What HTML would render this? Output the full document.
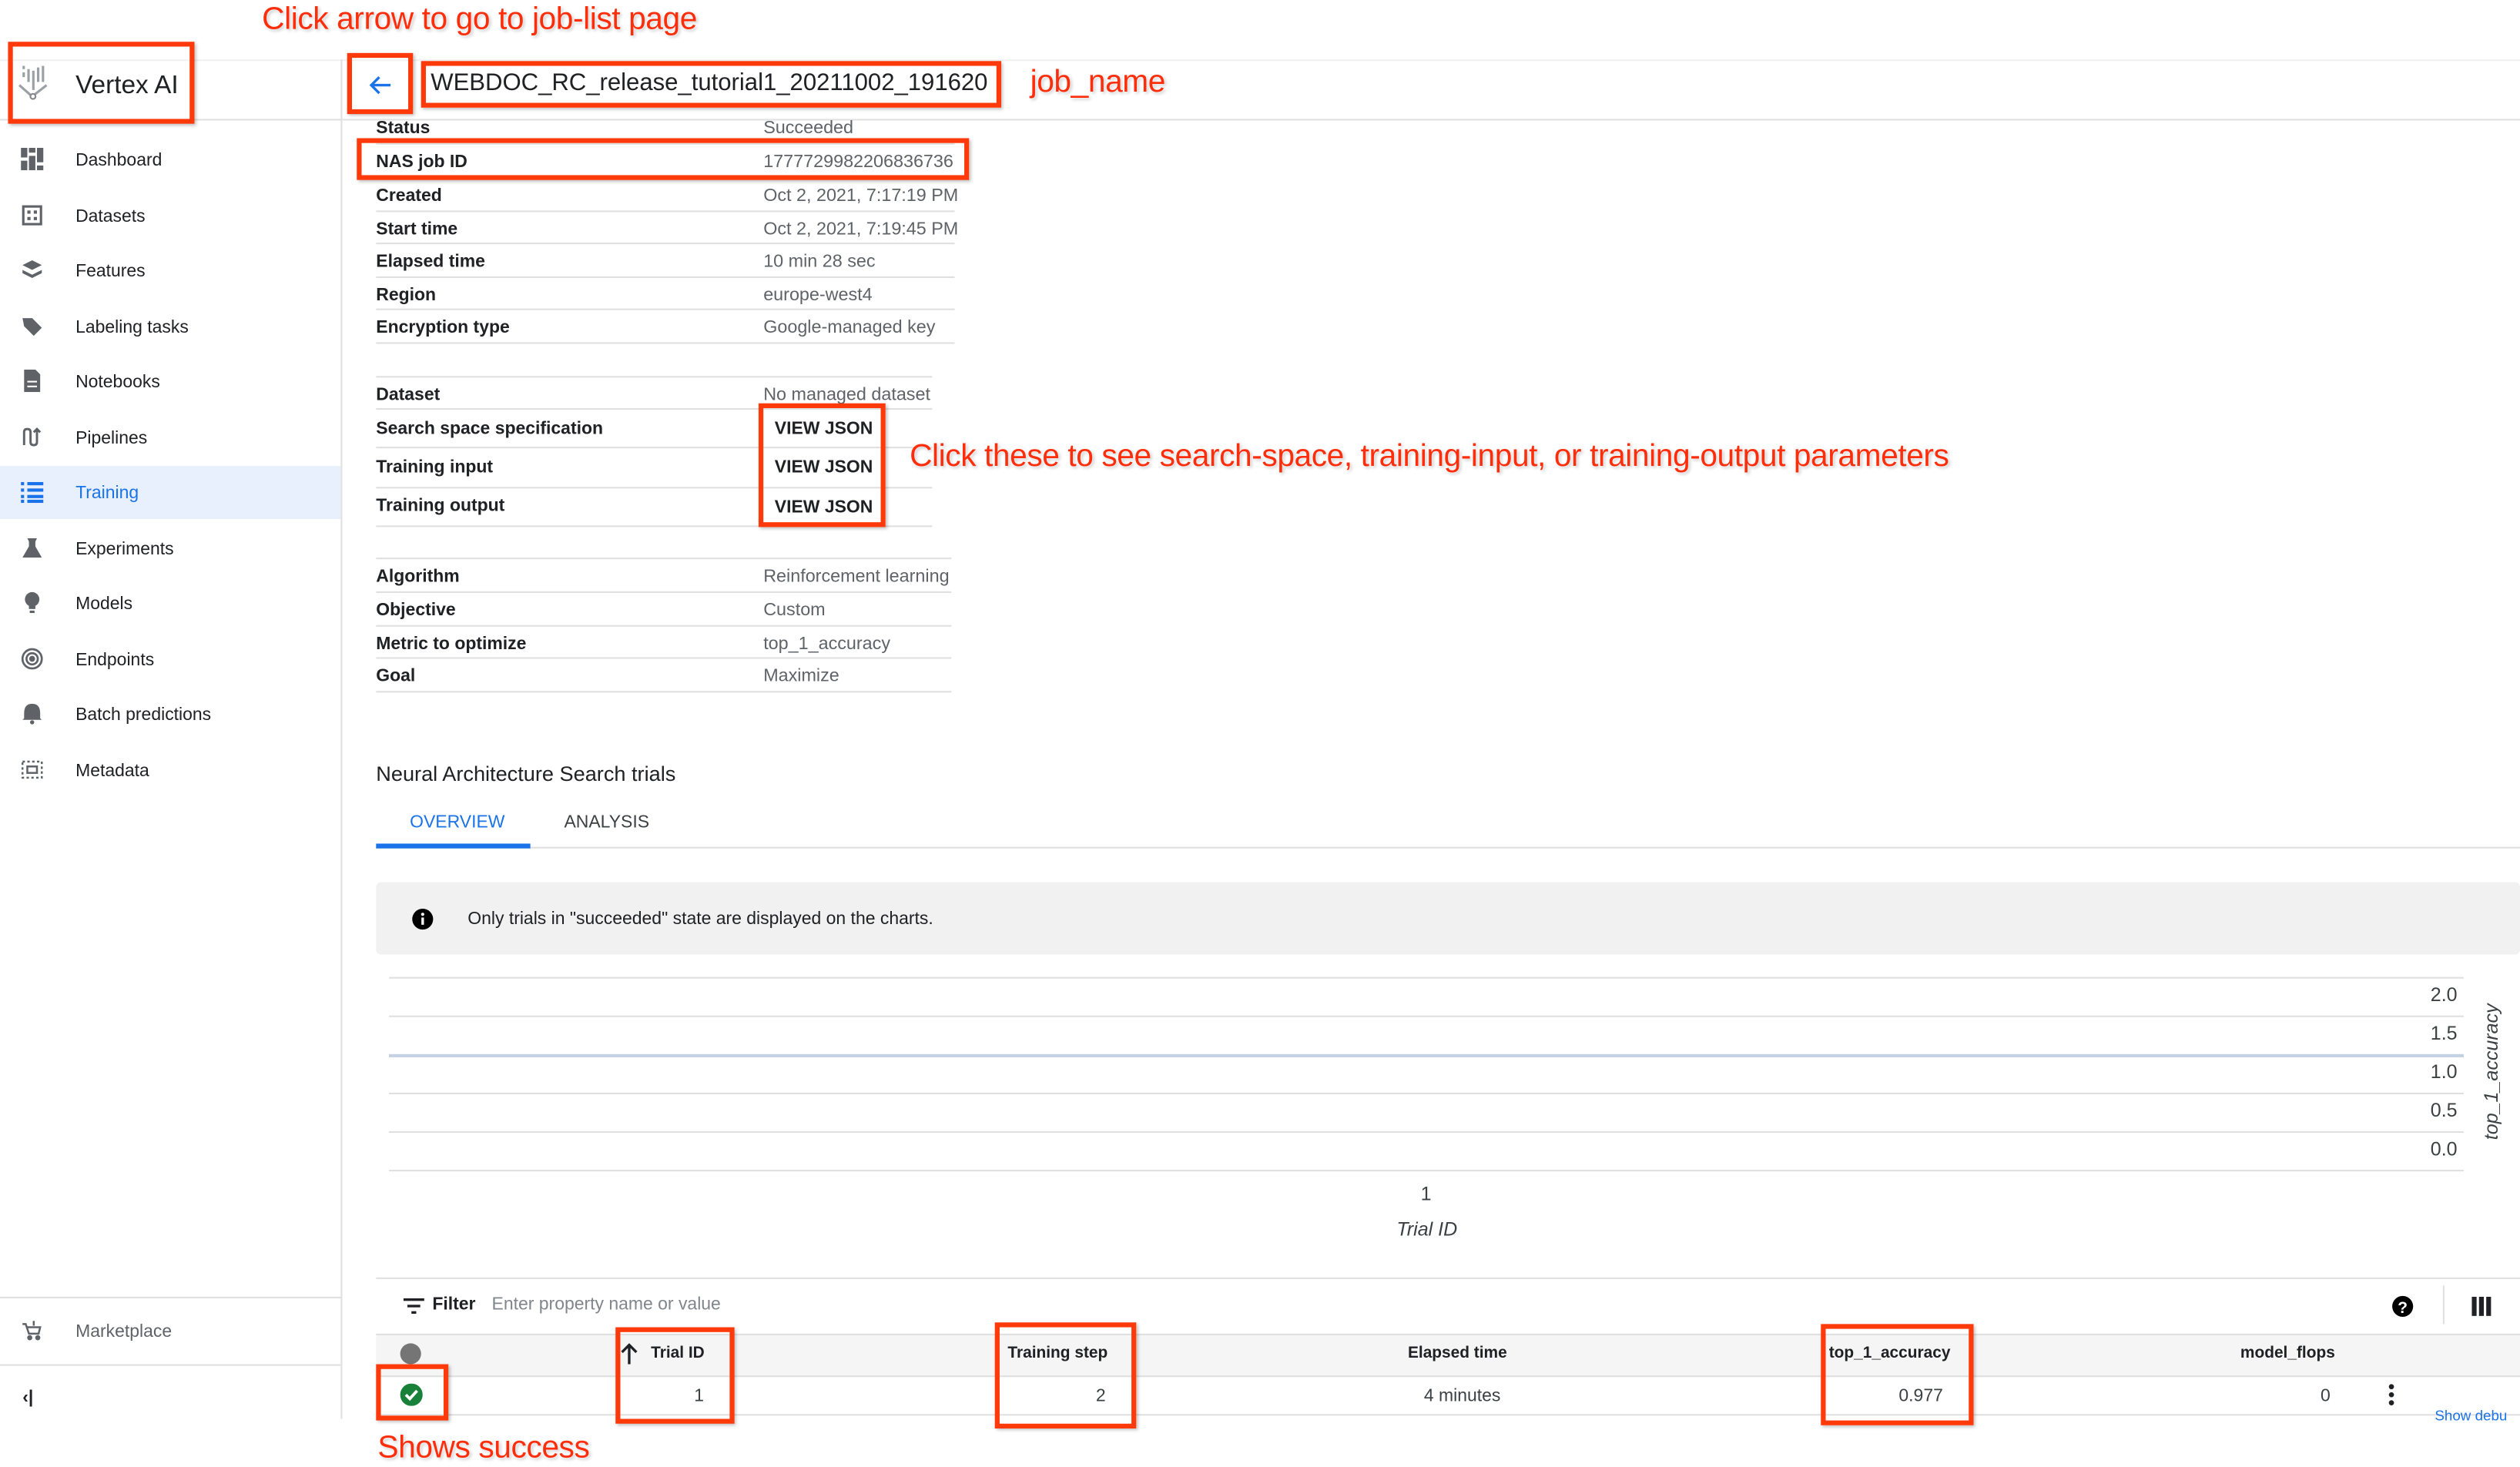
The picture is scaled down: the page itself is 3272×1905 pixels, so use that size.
<!DOCTYPE html>
<html><head><meta charset="utf-8">
<style>
html,body{margin:0;padding:0;background:#fff;overflow:hidden}
body{width:3272px;height:1905px;position:relative}
#s{position:absolute;left:0;top:0;width:1568px;height:913px;transform:scale(2.08673,2.08661);transform-origin:0 0;font-family:"Liberation Sans",sans-serif;color:#202124}
.a{position:absolute;white-space:nowrap}
.hl{position:absolute;height:1px;background:#e0e0e0}
.rb{position:absolute;border:3px solid #ff3a0a;box-sizing:border-box;box-shadow:1px 1px 2px rgba(0,0,0,.25)}
.ann{position:absolute;white-space:nowrap;color:#ff2d0a;font-size:19.5px;text-shadow:0 0 2px #fff,1px 1px 2px #bbb;letter-spacing:-0.2px}
.lab{font-size:11px;font-weight:bold;color:#202124;margin-top:1px}
.val{font-size:11.2px;color:#5f6368;margin-top:1px}
.nav{position:absolute;left:47px;font-size:11px;color:#202124;margin-top:1px}
.ic{position:absolute;left:13px;width:14px;height:14px}
</style></head><body><div id="s">
<div class="hl" style="left:0;top:37px;width:1568px;background:#f1f1f1"></div>
<div class="hl" style="left:0;top:74px;width:1568px"></div>
<div style="position:absolute;left:212px;top:37px;width:1px;height:846px;background:#e0e0e0"></div>

<svg class="a" style="left:10px;top:40px" width="22" height="24" viewBox="0 0 22 24">
<g fill="#9aa0a6"><rect x="4" y="1" width="1.5" height="2"/><rect x="4" y="5" width="1.5" height="3"/><rect x="7" y="3" width="1.5" height="8"/><rect x="10" y="4" width="1.5" height="12"/><rect x="13" y="2" width="1.5" height="9"/><rect x="16" y="1" width="1.5" height="10"/></g>
<path d="M2 13 L10 20 L19 13" stroke="#9aa0a6" stroke-width="1.5" fill="none"/><circle cx="10.5" cy="20" r="1.6" fill="#fff" stroke="#80868b"/></svg>
<div class="a" style="left:47px;top:45px;font-size:16px;color:#202124">Vertex AI</div>
<div class="rb" style="left:5px;top:26px;width:116px;height:51px"></div>
<div class="ann" style="left:163px;top:1px">Click arrow to go to job-list page</div>

<svg class="a" style="left:229px;top:45px" width="16" height="16" viewBox="0 0 16 16"><path d="M14 8 L2 8 M7 3 L2 8 L7 13" stroke="#1a73e8" stroke-width="1.6" fill="none"/></svg>
<div class="rb" style="left:216px;top:33px;width:41px;height:38px"></div>
<div class="a" style="left:268px;top:44px;font-size:14.9px;color:#202124">WEBDOC_RC_release_tutorial1_20211002_191620</div>
<div class="rb" style="left:262px;top:38px;width:361px;height:29px"></div>
<div class="ann" style="left:641px;top:40px">job_name</div>

<div style="position:absolute;left:0;top:290px;width:212px;height:33px;background:#e8f0fe"></div>
<svg class="ic" style="top:92px" viewBox="0 0 14 14" fill="#5f6368"><rect x="0" y="0" width="4" height="6"/><rect x="0" y="8" width="4" height="6"/><rect x="5" y="0" width="4" height="3"/><rect x="5" y="5" width="4" height="9"/><rect x="10" y="0" width="4" height="9"/><rect x="10" y="11" width="4" height="3"/></svg>
<div class="nav" style="top:93px">Dashboard</div>
<svg class="ic" style="top:127px" viewBox="0 0 14 14"><rect x="1.5" y="1.5" width="11" height="11" fill="none" stroke="#5f6368" stroke-width="1.5"/><g fill="#5f6368"><rect x="4" y="4" width="2" height="2"/><rect x="8" y="4" width="2" height="2"/><rect x="4" y="8" width="2" height="2"/><rect x="8" y="8" width="2" height="2"/></g></svg>
<div class="nav" style="top:128px">Datasets</div>
<svg class="ic" style="top:161px" viewBox="0 0 14 14" fill="#5f6368"><path d="M7 1 L13 4 L7 7 L1 4Z"/><path d="M1 7 L7 10 L13 7 L13 9 L7 12 L1 9Z"/></svg>
<div class="nav" style="top:162px">Features</div>
<svg class="ic" style="top:196px" viewBox="0 0 14 14" fill="#5f6368"><path d="M1 2 L7 2 L13 8 L8 13 L2 7Z"/></svg>
<div class="nav" style="top:197px">Labeling tasks</div>
<svg class="ic" style="top:230px" viewBox="0 0 14 14" fill="#5f6368"><path d="M2 0 L9 0 L12 3 L12 14 L2 14Z"/><rect x="4" y="7" width="6" height="1" fill="#fff"/><rect x="4" y="10" width="6" height="1" fill="#fff"/></svg>
<div class="nav" style="top:231px">Notebooks</div>
<svg class="ic" style="top:265px" viewBox="0 0 14 14" fill="none" stroke="#5f6368" stroke-width="1.4"><path d="M2 12 L2 4 Q2 2 4 2 Q6 2 6 4 L6 10 Q6 12 8 12 Q10 12 10 10 L10 2 M8 4 L10 2 L12 4"/></svg>
<div class="nav" style="top:266px">Pipelines</div>
<svg class="ic" style="top:299px" viewBox="0 0 14 14" fill="#1a73e8"><rect x="0" y="1" width="2" height="2"/><rect x="4" y="1" width="10" height="2"/><rect x="0" y="5" width="2" height="2"/><rect x="4" y="5" width="10" height="2"/><rect x="0" y="9" width="2" height="2"/><rect x="4" y="9" width="10" height="2"/><rect x="0" y="12" width="2" height="2"/><rect x="4" y="12" width="10" height="2"/></svg>
<div class="nav" style="top:300px;color:#1a73e8">Training</div>
<svg class="ic" style="top:334px" viewBox="0 0 14 14" fill="#5f6368"><path d="M4 1 L10 1 L9 3 L9 6 L13 13 L1 13 L5 6 L5 3Z"/></svg>
<div class="nav" style="top:335px">Experiments</div>
<svg class="ic" style="top:368px" viewBox="0 0 14 14" fill="#5f6368"><circle cx="7" cy="5" r="4.5"/><rect x="5" y="9" width="4" height="2"/><rect x="5.5" y="12" width="3" height="1.5"/></svg>
<div class="nav" style="top:369px">Models</div>
<svg class="ic" style="top:403px" viewBox="0 0 14 14" fill="none" stroke="#5f6368" stroke-width="1.3"><circle cx="7" cy="7" r="6"/><circle cx="7" cy="7" r="3.5"/><circle cx="7" cy="7" r="1.2" fill="#5f6368"/></svg>
<div class="nav" style="top:404px">Endpoints</div>
<svg class="ic" style="top:437px" viewBox="0 0 14 14" fill="#5f6368"><path d="M7 1 Q12 1 12 7 L12 10 L13 11 L1 11 L2 10 L2 7 Q2 1 7 1Z"/><circle cx="7" cy="12.5" r="1.3"/></svg>
<div class="nav" style="top:438px">Batch predictions</div>
<svg class="ic" style="top:472px" viewBox="0 0 14 14" fill="none" stroke="#5f6368" stroke-width="1.2"><rect x="1" y="2" width="12" height="10" stroke-dasharray="1.5 1.5"/><rect x="4" y="5" width="6" height="4"/></svg>
<div class="nav" style="top:473px">Metadata</div>
<div class="hl" style="left:0;top:807px;width:212px"></div>
<svg class="ic" style="top:821px" viewBox="0 0 14 14" fill="none" stroke="#5f6368" stroke-width="1.2"><path d="M1 3 L3 3 L5 9 L11 9 L12 5 L4 5"/><circle cx="5.5" cy="11.5" r="1" fill="#5f6368"/><circle cx="10.5" cy="11.5" r="1" fill="#5f6368"/><path d="M8 1 L8 4"/></svg>
<div class="nav" style="top:822px;color:#5f6368">Marketplace</div>
<div class="hl" style="left:0;top:849px;width:212px"></div>
<div class="a" style="left:14px;top:864px;font-size:11px;color:#202124;font-weight:bold">&lsaquo;|</div>

<div class="a lab" style="left:234px;top:73px">Status</div><div class="a val" style="left:475px;top:73px">Succeeded</div>
<div class="hl" style="left:234px;top:89px;width:360px"></div>
<div class="a lab" style="left:234px;top:94px">NAS job ID</div><div class="a val" style="left:475px;top:94px">1777729982206836736</div>
<div class="hl" style="left:234px;top:110px;width:360px"></div>
<div class="a lab" style="left:234px;top:115px">Created</div><div class="a val" style="left:475px;top:115px">Oct 2, 2021, 7:17:19 PM</div>
<div class="hl" style="left:234px;top:131px;width:360px"></div>
<div class="a lab" style="left:234px;top:136px">Start time</div><div class="a val" style="left:475px;top:136px">Oct 2, 2021, 7:19:45 PM</div>
<div class="hl" style="left:234px;top:151px;width:360px"></div>
<div class="a lab" style="left:234px;top:156px">Elapsed time</div><div class="a val" style="left:475px;top:156px">10 min 28 sec</div>
<div class="hl" style="left:234px;top:172px;width:360px"></div>
<div class="a lab" style="left:234px;top:177px">Region</div><div class="a val" style="left:475px;top:177px">europe-west4</div>
<div class="hl" style="left:234px;top:192px;width:360px"></div>
<div class="a lab" style="left:234px;top:197px">Encryption type</div><div class="a val" style="left:475px;top:197px">Google-managed key</div>
<div class="hl" style="left:234px;top:213px;width:360px"></div>
<div class="rb" style="left:222px;top:86px;width:381px;height:26px"></div>

<div class="hl" style="left:234px;top:234px;width:346px"></div>
<div class="a lab" style="left:234px;top:239px">Dataset</div><div class="a val" style="left:475px;top:239px">No managed dataset</div>
<div class="hl" style="left:234px;top:254px;width:346px"></div>
<div class="a lab" style="left:234px;top:260px">Search space specification</div><div class="a lab" style="left:482px;top:260px">VIEW JSON</div>
<div class="hl" style="left:234px;top:278px;width:346px"></div>
<div class="a lab" style="left:234px;top:284px">Training input</div><div class="a lab" style="left:482px;top:284px">VIEW JSON</div>
<div class="hl" style="left:234px;top:303px;width:346px"></div>
<div class="a lab" style="left:234px;top:308px">Training output</div><div class="a lab" style="left:482px;top:309px">VIEW JSON</div>
<div class="hl" style="left:234px;top:327px;width:346px"></div>
<div class="rb" style="left:472px;top:251px;width:79px;height:77px"></div>
<div class="ann" style="left:566px;top:273px">Click these to see search-space, training-input, or training-output parameters</div>

<div class="hl" style="left:234px;top:347px;width:358px"></div>
<div class="a lab" style="left:234px;top:352px">Algorithm</div><div class="a val" style="left:475px;top:352px">Reinforcement learning</div>
<div class="hl" style="left:234px;top:368px;width:358px"></div>
<div class="a lab" style="left:234px;top:373px">Objective</div><div class="a val" style="left:475px;top:373px">Custom</div>
<div class="hl" style="left:234px;top:389px;width:358px"></div>
<div class="a lab" style="left:234px;top:394px">Metric to optimize</div><div class="a val" style="left:475px;top:394px">top_1_accuracy</div>
<div class="hl" style="left:234px;top:409px;width:358px"></div>
<div class="a lab" style="left:234px;top:414px">Goal</div><div class="a val" style="left:475px;top:414px">Maximize</div>
<div class="hl" style="left:234px;top:430px;width:358px"></div>

<div class="a" style="left:234px;top:474px;font-size:13px;color:#202124">Neural Architecture Search trials</div>
<div class="a" style="left:255px;top:506px;font-size:11px;color:#1a73e8">OVERVIEW</div>
<div class="a" style="left:351px;top:506px;font-size:11px;color:#3c4043">ANALYSIS</div>
<div class="hl" style="left:234px;top:527px;width:1334px"></div>
<div style="position:absolute;left:234px;top:525px;width:96px;height:3px;background:#1a73e8"></div>

<div style="position:absolute;left:234px;top:549px;width:1334px;height:45px;background:#f1f1f1;border-radius:3px"></div>
<svg class="a" style="left:256px;top:565px" width="14" height="14" viewBox="0 0 14 14"><circle cx="7" cy="7" r="6.5" fill="#000"/><rect x="6.2" y="6" width="1.6" height="4.5" fill="#fff"/><circle cx="7" cy="4" r="1" fill="#fff"/></svg>
<div class="a" style="left:291px;top:566px;font-size:11px;color:#202124">Only trials in "succeeded" state are displayed on the charts.</div>

<div class="hl" style="left:242px;top:608px;width:1291px"></div>
<div class="hl" style="left:242px;top:632px;width:1291px"></div>
<div class="hl" style="left:242px;top:656px;width:1291px;background:#c5d2e6;height:2px"></div>
<div class="hl" style="left:242px;top:680px;width:1291px"></div>
<div class="hl" style="left:242px;top:704px;width:1291px"></div>
<div class="hl" style="left:242px;top:728px;width:1291px"></div>
<div class="a" style="left:1500px;top:612px;width:29px;text-align:right;font-size:12px;color:#3c4043">2.0</div>
<div class="a" style="left:1500px;top:636px;width:29px;text-align:right;font-size:12px;color:#3c4043">1.5</div>
<div class="a" style="left:1500px;top:660px;width:29px;text-align:right;font-size:12px;color:#3c4043">1.0</div>
<div class="a" style="left:1500px;top:684px;width:29px;text-align:right;font-size:12px;color:#3c4043">0.5</div>
<div class="a" style="left:1500px;top:708px;width:29px;text-align:right;font-size:12px;color:#3c4043">0.0</div>
<div class="a" style="left:1505px;top:660px;width:90px;text-align:center;font-size:12px;font-style:italic;color:#3c4043;transform:rotate(-90deg)">top_1_accuracy</div>
<div class="a" style="left:884px;top:736px;font-size:12px;color:#3c4043">1</div>
<div class="a" style="left:869px;top:758px;font-size:12px;font-style:italic;color:#3c4043">Trial ID</div>

<div class="hl" style="left:234px;top:795px;width:1334px"></div>
<svg class="a" style="left:251px;top:807px" width="13" height="11" viewBox="0 0 13 11" fill="#202124"><rect x="0" y="1" width="13" height="1.6"/><rect x="2.5" y="5" width="8" height="1.6"/><rect x="5" y="9" width="3" height="1.6"/></svg>
<div class="a" style="left:269px;top:806px;font-size:11px;font-weight:bold">Filter</div>
<div class="a" style="left:306px;top:806px;font-size:11px;color:#80868b">Enter property name or value</div>
<svg class="a" style="left:1488px;top:806px" width="14" height="14" viewBox="0 0 14 14"><circle cx="7" cy="7" r="6.5" fill="#000"/><text x="7" y="11" text-anchor="middle" font-size="10" font-weight="bold" fill="#fff" font-family="Liberation Sans">?</text></svg>
<div style="position:absolute;left:1520px;top:800px;width:1px;height:24px;background:#e0e0e0"></div>
<svg class="a" style="left:1538px;top:807px" width="12" height="12" viewBox="0 0 12 12" fill="#202124"><rect x="0" y="0" width="3" height="12"/><rect x="4.5" y="0" width="3" height="12"/><rect x="9" y="0" width="3" height="12"/></svg>

<div style="position:absolute;left:234px;top:830px;width:1334px;height:25px;background:#f5f5f5;border-top:1px solid #e0e0e0;border-bottom:1px solid #e0e0e0"></div>
<div style="position:absolute;left:249px;top:836px;width:13px;height:13px;border-radius:50%;background:#757575"></div>
<svg class="a" style="left:386px;top:836px" width="11" height="13" viewBox="0 0 11 13"><path d="M5.5 13 L5.5 1 M1 5.5 L5.5 1 L10 5.5" stroke="#202124" stroke-width="1.6" fill="none"/></svg>
<div class="a" style="left:405px;top:837px;font-size:10px;font-weight:bold">Trial ID</div>
<div class="a" style="left:627px;top:837px;font-size:10px;font-weight:bold">Training step</div>
<div class="a" style="left:876px;top:837px;font-size:10px;font-weight:bold">Elapsed time</div>
<div class="a" style="left:1138px;top:837px;font-size:10px;font-weight:bold">top_1_accuracy</div>
<div class="a" style="left:1394px;top:837px;font-size:10px;font-weight:bold">model_flops</div>
<svg class="a" style="left:249px;top:861px" width="14" height="14" viewBox="0 0 14 14"><circle cx="7" cy="7" r="7" fill="#188038"/><path d="M3.5 7 L6 9.5 L10.5 4.5" stroke="#fff" stroke-width="1.8" fill="none"/></svg>
<div class="a" style="left:400px;top:863px;width:38px;text-align:right;font-size:11px;color:#3c4043">1</div>
<div class="a" style="left:650px;top:863px;width:38px;text-align:right;font-size:11px;color:#3c4043">2</div>
<div class="a" style="left:886px;top:863px;font-size:11px;color:#3c4043">4 minutes</div>
<div class="a" style="left:1150px;top:863px;width:59px;text-align:right;font-size:11px;color:#3c4043">0.977</div>
<div class="a" style="left:1420px;top:863px;width:30px;text-align:right;font-size:11px;color:#3c4043">0</div>
<svg class="a" style="left:1486px;top:861px" width="4" height="14" viewBox="0 0 4 14" fill="#202124"><circle cx="2" cy="2" r="1.6"/><circle cx="2" cy="7" r="1.6"/><circle cx="2" cy="12" r="1.6"/></svg>
<div class="hl" style="left:234px;top:880px;width:1334px"></div>
<div class="a" style="left:1515px;top:876px;font-size:9px;color:#1a73e8">Show debu</div>

<div class="rb" style="left:234px;top:849px;width:45px;height:35px"></div>
<div class="rb" style="left:383px;top:826px;width:74px;height:60px"></div>
<div class="rb" style="left:619px;top:823px;width:88px;height:66px"></div>
<div class="rb" style="left:1133px;top:824px;width:95px;height:63px"></div>
<div class="ann" style="left:235px;top:890px">Shows success</div>
</div></body></html>
